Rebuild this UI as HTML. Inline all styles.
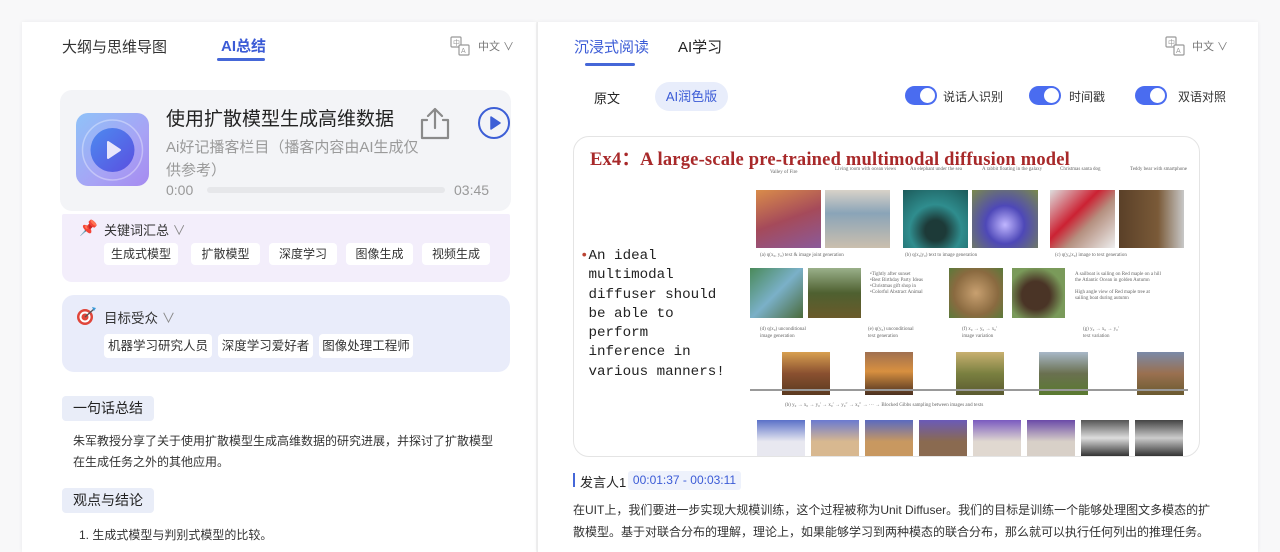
<!DOCTYPE html>
<html><head><meta charset="utf-8">
<style>
*{margin:0;padding:0;box-sizing:border-box}
body{width:1280px;height:545px;overflow:hidden;background:#f8f8f9;font-family:"Liberation Sans","Noto Sans CJK SC",sans-serif;color:#333;position:relative}
.a{position:absolute;white-space:nowrap}
.card{position:absolute;background:#fff}
.tag{position:absolute;background:#fff;border-radius:4px;font-size:12px;color:#333;text-align:center;height:22px;line-height:22px}
.tag2{height:24px;line-height:24px;font-size:12.5px}
.im{position:absolute}
.cap{position:absolute;font-family:"Liberation Serif",serif;font-size:5px;color:#666;white-space:nowrap}
.tg{position:absolute;width:32px;height:19px;border-radius:10px;background:#4a6cf0}
.tg::after{content:"";position:absolute;right:2px;top:2px;width:15px;height:15px;border-radius:50%;background:#fff}
</style></head><body>
<div class="card" style="left:22px;top:22px;width:514px;height:530px;box-shadow:0 0 4px rgba(0,0,0,.06)"></div>
<div class="card" style="left:537px;top:22px;width:721px;height:530px;box-shadow:0 0 4px rgba(0,0,0,.06);border-left:1px solid #ececec"></div>

<!-- left tabs -->
<div class="a" style="left:62px;top:36px;font-size:15px;color:#333">大纲与思维导图</div>
<div class="a" style="left:221px;top:35px;font-size:15px;color:#3b5bd6;font-weight:bold">AI总结</div>
<div class="a" style="left:217px;top:58px;width:48px;height:3px;background:#4567d8;border-radius:2px"></div>
<svg class="a" style="left:450px;top:36px" width="20" height="20" viewBox="0 0 20 20" fill="none" stroke="#999" stroke-width="1.2"><rect x="1" y="1" width="10" height="10" rx="1"/><rect x="9" y="9" width="10" height="10" rx="1" fill="#fff"/><text x="3" y="9" font-size="7" fill="#999" stroke="none">中</text><text x="11" y="17" font-size="7" fill="#999" stroke="none">A</text></svg>
<div class="a" style="left:478px;top:38px;font-size:11px;color:#777">中文 ∨</div>

<!-- player -->
<div class="a" style="left:60px;top:90px;width:451px;height:121px;background:#f3f4f7;border-radius:12px"></div>
<div class="a" style="left:76px;top:113px;width:73px;height:73px;border-radius:12px;background:linear-gradient(135deg,#8fc2f8,#a7a3f5 60%,#a58af0)"></div>
<svg class="a" style="left:76px;top:113px" width="73" height="73"><circle cx="36.5" cy="37" r="30" fill="none" stroke="rgba(255,255,255,.35)" stroke-width="1.5"/><circle cx="36.5" cy="37" r="22" fill="url(#g1)"/><defs><linearGradient id="g1" x1="0" y1="0" x2="1" y2="1"><stop offset="0" stop-color="#4d8af0"/><stop offset="1" stop-color="#5a4fe0"/></linearGradient></defs><path d="M32 29 L44 37 L32 45 Z" fill="#e8e6fb" stroke="#e8e6fb" stroke-width="2" stroke-linejoin="round"/></svg>
<div class="a" style="left:166px;top:104px;font-size:19px;color:#222">使用扩散模型生成高维数据</div>
<div class="a" style="left:166px;top:136px;font-size:15px;color:#9a9a9a;line-height:23px;white-space:normal;width:262px">Ai好记播客栏目（播客内容由AI生成仅供参考）</div>
<div class="a" style="left:166px;top:182px;font-size:14px;color:#999">0:00</div>
<div class="a" style="left:207px;top:187px;width:238px;height:6px;border-radius:3px;background:#e6e7ea"></div>
<div class="a" style="left:454px;top:182px;font-size:14px;color:#999">03:45</div>
<svg class="a" style="left:417px;top:106px" width="36" height="35" viewBox="0 0 36 35" fill="none" stroke="#8a8a8a" stroke-width="2.2" stroke-linecap="round" stroke-linejoin="round"><path d="M10 14 H5 V32 H31 V14 H26"/><path d="M18 22 V3 M11 10 L18 3 L25 10"/></svg>
<svg class="a" style="left:477px;top:106px" width="34" height="34"><circle cx="17" cy="17" r="15" fill="none" stroke="#3d5fd6" stroke-width="2"/><path d="M14 11 L23 17 L14 23 Z" fill="#3d5fd6" stroke="#3d5fd6" stroke-width="1.5" stroke-linejoin="round"/></svg>

<!-- keywords -->
<div class="a" style="left:62px;top:214px;width:448px;height:68px;background:#f3eefb;border-radius:2px 2px 10px 10px"></div>
<div class="a" style="left:79px;top:219px;font-size:15px;color:#d33">📌</div>
<div class="a" style="left:104px;top:220px;font-size:13px;color:#333">关键词汇总 <span style="color:#888">∨</span></div>
<div class="tag" style="left:104px;top:243px;width:74px">生成式模型</div>
<div class="tag" style="left:191px;top:243px;width:69px">扩散模型</div>
<div class="tag" style="left:269px;top:243px;width:68px">深度学习</div>
<div class="tag" style="left:346px;top:243px;width:67px">图像生成</div>
<div class="tag" style="left:422px;top:243px;width:68px">视频生成</div>

<!-- audience -->
<div class="a" style="left:62px;top:295px;width:448px;height:77px;background:#e9ecfa;border-radius:12px"></div>
<svg class="a" style="left:76px;top:306px" width="22" height="20"><circle cx="9" cy="11" r="8" fill="#e0453a"/><circle cx="9" cy="11" r="5.5" fill="#fff"/><circle cx="9" cy="11" r="3.5" fill="#e0453a"/><path d="M9 11 L18 3" stroke="#555" stroke-width="1.3"/><path d="M16 1 L20 2 L18 5 Z" fill="#3a9ad9"/></svg>
<div class="a" style="left:104px;top:307px;font-size:13.5px;color:#333">目标受众 <span style="color:#888">∨</span></div>
<div class="tag tag2" style="left:104px;top:334px;width:108px">机器学习研究人员</div>
<div class="tag tag2" style="left:218px;top:334px;width:95px">深度学习爱好者</div>
<div class="tag tag2" style="left:319px;top:334px;width:94px">图像处理工程师</div>

<div class="a" style="left:62px;top:396px;width:92px;height:25px;background:#e9edf8;border-radius:4px;font-size:14px;line-height:25px;text-align:center;color:#222">一句话总结</div>
<div class="a" style="left:73px;top:431px;font-size:12px;color:#333;line-height:21px">朱军教授分享了关于使用扩散模型生成高维数据的研究进展，并探讨了扩散模型<br>在生成任务之外的其他应用。</div>
<div class="a" style="left:62px;top:488px;width:92px;height:25px;background:#e9edf8;border-radius:4px;font-size:14px;line-height:25px;text-align:center;color:#222">观点与结论</div>
<div class="a" style="left:79px;top:526px;font-size:12px;color:#333">1. 生成式模型与判别式模型的比较。</div>

<!-- right tabs -->
<div class="a" style="left:574px;top:36px;font-size:15px;color:#3b5bd6">沉浸式阅读</div>
<div class="a" style="left:678px;top:36px;font-size:15px;color:#222">AI学习</div>
<div class="a" style="left:585px;top:63px;width:50px;height:3px;background:#4567d8;border-radius:2px"></div>
<svg class="a" style="left:1165px;top:36px" width="20" height="20" viewBox="0 0 20 20" fill="none" stroke="#999" stroke-width="1.2"><rect x="1" y="1" width="10" height="10" rx="1"/><rect x="9" y="9" width="10" height="10" rx="1" fill="#fff"/><text x="3" y="9" font-size="7" fill="#999" stroke="none">中</text><text x="11" y="17" font-size="7" fill="#999" stroke="none">A</text></svg>
<div class="a" style="left:1192px;top:38px;font-size:11px;color:#777">中文 ∨</div>

<div class="a" style="left:594px;top:88px;font-size:13px;color:#222">原文</div>
<div class="a" style="left:655px;top:82px;width:73px;height:29px;border-radius:15px;background:#e8edfb;font-size:13px;line-height:29px;text-align:center;color:#3b5bd6">AI润色版</div>
<div class="tg" style="left:905px;top:86px"></div><div class="a" style="left:943px;top:88px;font-size:12px">说话人识别</div>
<div class="tg" style="left:1029px;top:86px"></div><div class="a" style="left:1069px;top:88px;font-size:12px">时间戳</div>
<div class="tg" style="left:1135px;top:86px"></div><div class="a" style="left:1178px;top:88px;font-size:12px">双语对照</div>

<!-- slide -->
<div class="a" style="left:573px;top:136px;width:627px;height:321px;border:1px solid #e4e4e4;border-radius:16px;background:#fff;overflow:hidden">
<div style="position:absolute;left:16px;top:8px;font-family:'Liberation Serif',serif;font-weight:bold;font-size:18.5px;color:#a8292a;white-space:nowrap;letter-spacing:0.2px">Ex4：A large-scale pre-trained multimodal diffusion model</div>
<div style="position:absolute;left:6px;top:110px;font-family:'Liberation Mono',monospace;font-size:14.2px;line-height:19.3px;color:#222;white-space:pre"><span style="color:#b43">•</span>An ideal
 multimodal
 diffuser should
 be able to
 perform
 inference in
 various manners!</div>
</div>
<div style="position:absolute;left:0;top:0">
<div class="im" style="left:756px;top:190px;width:65px;height:58px;background:linear-gradient(160deg,#d98c4a,#a54a5a 50%,#8a5a9a)"></div>
<div class="im" style="left:825px;top:190px;width:65px;height:58px;background:linear-gradient(180deg,#d8d2c8,#8aa4b8 40%,#cbbfae)"></div>
<div class="im" style="left:903px;top:190px;width:65px;height:58px;background:radial-gradient(circle at 50% 70%,#1d3a38 20%,#2f8d8e 50%,#1c5a5a)"></div>
<div class="im" style="left:972px;top:190px;width:66px;height:58px;background:radial-gradient(circle at 50% 60%,#c0b6ff,#4e48b8 40%,#7a8a4a)"></div>
<div class="im" style="left:1050px;top:190px;width:65px;height:58px;background:linear-gradient(135deg,#ddd,#c23 40%,#b59080 60%,#eee)"></div>
<div class="im" style="left:1119px;top:190px;width:65px;height:58px;background:linear-gradient(90deg,#5a4028,#7a5a38 60%,#c8c8c8)"></div>
<div class="im" style="left:750px;top:268px;width:53px;height:50px;background:linear-gradient(135deg,#4a8a5a,#7ab0c8 50%,#4a6a3a)"></div>
<div class="im" style="left:808px;top:268px;width:53px;height:50px;background:linear-gradient(180deg,#9ab08a,#4e6030 50%,#6a5a2a)"></div>
<div class="im" style="left:949px;top:268px;width:54px;height:50px;background:radial-gradient(circle at 50% 50%,#c8a070,#8a6a40 60%,#5a7a3a)"></div>
<div class="im" style="left:1012px;top:268px;width:53px;height:50px;background:radial-gradient(circle at 45% 55%,#4a3426 35%,#7a9a5a 70%)"></div>
<div class="im" style="left:782px;top:352px;width:48px;height:43px;background:linear-gradient(180deg,#d8a050,#8a5030 50%,#5a3a20)"></div>
<div class="im" style="left:865px;top:352px;width:48px;height:43px;background:linear-gradient(180deg,#a07050,#d89040 45%,#4a3020)"></div>
<div class="im" style="left:956px;top:352px;width:48px;height:43px;background:linear-gradient(180deg,#c8b070,#7a8040 50%,#5a5a30)"></div>
<div class="im" style="left:1039px;top:352px;width:49px;height:43px;background:linear-gradient(180deg,#a8b8c8,#6a7050 50%,#5a7a30)"></div>
<div class="im" style="left:1137px;top:352px;width:47px;height:43px;background:linear-gradient(180deg,#7a8aa8,#9a7050 50%,#6a5a30)"></div>
<div class="im" style="left:750px;top:389px;width:438px;height:2px;background:#999"></div>
<div class="im" style="left:757px;top:420px;width:48px;height:36px;background:linear-gradient(180deg,#5a70c8,#e8e8f0 60%)"></div>
<div class="im" style="left:811px;top:420px;width:48px;height:36px;background:linear-gradient(180deg,#6a7ad0,#d8b890 60%)"></div>
<div class="im" style="left:865px;top:420px;width:48px;height:36px;background:linear-gradient(180deg,#5a6ac0,#c89860 60%)"></div>
<div class="im" style="left:919px;top:420px;width:48px;height:36px;background:linear-gradient(180deg,#6a5ab8,#8a6a50 60%)"></div>
<div class="im" style="left:973px;top:420px;width:48px;height:36px;background:linear-gradient(180deg,#7a5ac0,#e0d8d0 60%)"></div>
<div class="im" style="left:1027px;top:420px;width:48px;height:36px;background:linear-gradient(180deg,#6a4aa8,#d8d0c8 60%)"></div>
<div class="im" style="left:1081px;top:420px;width:48px;height:36px;background:linear-gradient(180deg,#555,#ddd 50%,#333)"></div>
<div class="im" style="left:1135px;top:420px;width:48px;height:36px;background:linear-gradient(180deg,#444,#ccc 50%,#333)"></div>
<div class="cap" style="left:760px;top:253px">(a) q(x₀, y₀) text &amp; image joint generation</div>
<div class="cap" style="left:905px;top:253px">(b) q(x₀|y₀) text to image generation</div>
<div class="cap" style="left:1055px;top:253px">(c) q(y₀|x₀) image to text generation</div>
<div class="cap" style="left:770px;top:170px">Valley of Fire</div><div class="cap" style="left:835px;top:167px">Living room with ocean views</div>
<div class="cap" style="left:910px;top:167px">An elephant under the sea</div><div class="cap" style="left:982px;top:167px">A rabbit floating in the galaxy</div>
<div class="cap" style="left:1060px;top:167px">Christmas santa dog</div><div class="cap" style="left:1130px;top:167px">Teddy bear with smartphone</div>
<div class="cap" style="left:870px;top:272px;line-height:6px">•Tightly after sunset<br>•Best Birthday Party Ideas<br>•Christmas gift shop in<br>•Colorful Abstract Animal</div>
<div class="cap" style="left:1075px;top:272px;line-height:6px">A sailboat is sailing on    Red maple on a hill<br>the Atlantic Ocean   in golden Autumn<br><br>High angle view of    Red maple tree at<br>sailing boat during   autumn</div>
<div class="cap" style="left:760px;top:326px;line-height:7px">(d) q(x₀) unconditional<br>image generation</div>
<div class="cap" style="left:868px;top:326px;line-height:7px">(e) q(y₀) unconditional<br>text generation</div>
<div class="cap" style="left:962px;top:326px;line-height:7px">(f) x₀ → y₀ → x₀′<br>image variation</div>
<div class="cap" style="left:1083px;top:326px;line-height:7px">(g) y₀ → x₀ → y₀′<br>text variation</div>
<div class="cap" style="left:785px;top:403px">(b) y₀ → x₀ → y₀′ → x₀′ → y₀″ → x₀″ → ··· → Blocked Gibbs sampling between images and texts</div>
</div>

<!-- speaker -->
<div class="a" style="left:573px;top:473px;width:2px;height:14px;background:#4567d8"></div>
<div class="a" style="left:580px;top:472px;font-size:13px;color:#222">发言人1</div>
<div class="a" style="left:628px;top:471px;width:113px;height:19px;background:#eef2fc;border-radius:3px;font-size:12px;line-height:19px;text-align:center;color:#3b5bd6">00:01:37 - 00:03:11</div>
<div class="a" style="left:573px;top:499px;font-size:12px;line-height:22px;color:#333">在UIT上，我们要进一步实现大规模训练，这个过程被称为Unit Diffuser。我们的目标是训练一个能够处理图文多模态的扩<br>散模型。基于对联合分布的理解，理论上，如果能够学习到两种模态的联合分布，那么就可以执行任何列出的推理任务。</div>
</body></html>
